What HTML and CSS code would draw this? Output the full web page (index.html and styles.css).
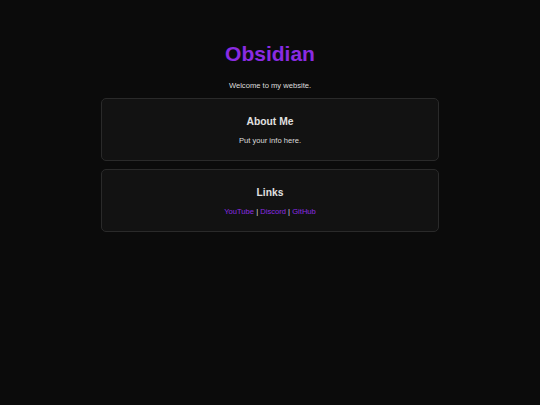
FILE: index.html
```html
<!DOCTYPE html>
<html>
<head>
<meta charset="utf-8">
<link rel="stylesheet" href="styles.css">
</head>
<body>
<main class="page">
  <h1 class="title">Obsidian</h1>
  <p class="intro">Welcome to my website.</p>
  <section class="card">
    <h2 class="card-title">About Me</h2>
    <p class="card-text">Put your info here.</p>
  </section>
  <section class="card">
    <h2 class="card-title">Links</h2>
    <p class="card-text"><a class="link" href="#">YouTube</a> | <a class="link" href="#">Discord</a> | <a class="link" href="#">GitHub</a></p>
  </section>
</main>
</body>
</html>
```
FILE: styles.css
```css
html, body {
  margin: 0;
  padding: 0;
  background: #0b0b0b;
  color: #e0e0e0;
  font-family: "Liberation Sans", Arial, sans-serif;
}
.page {
  width: 338px;
  margin: 0 auto;
  padding-top: 41px;
  display: flex;
  flex-direction: column;
  align-items: stretch;
  text-align: center;
}
.title {
  margin: 0;
  font-size: 21px;
  line-height: 26px;
  color: #8a2be2;
  font-weight: bold;
}
.intro {
  margin: 14px 0 7px;
  font-size: 7.6px;
  line-height: 10px;
  color: #dddddd;
}
.card {
  background: #121212;
  border: 1px solid #2a2a2a;
  border-radius: 5px;
  padding: 17px 10px 14px;
  margin-bottom: 8px;
}
.card-title {
  margin: 0 0 8px;
  font-size: 10.3px;
  line-height: 12px;
  font-weight: bold;
  color: #e0e0e0;
}
.card-text {
  margin: 0;
  font-size: 7.6px;
  line-height: 10px;
  color: #dddddd;
}
.link {
  color: #8a2be2;
  text-decoration: none;
}
```
